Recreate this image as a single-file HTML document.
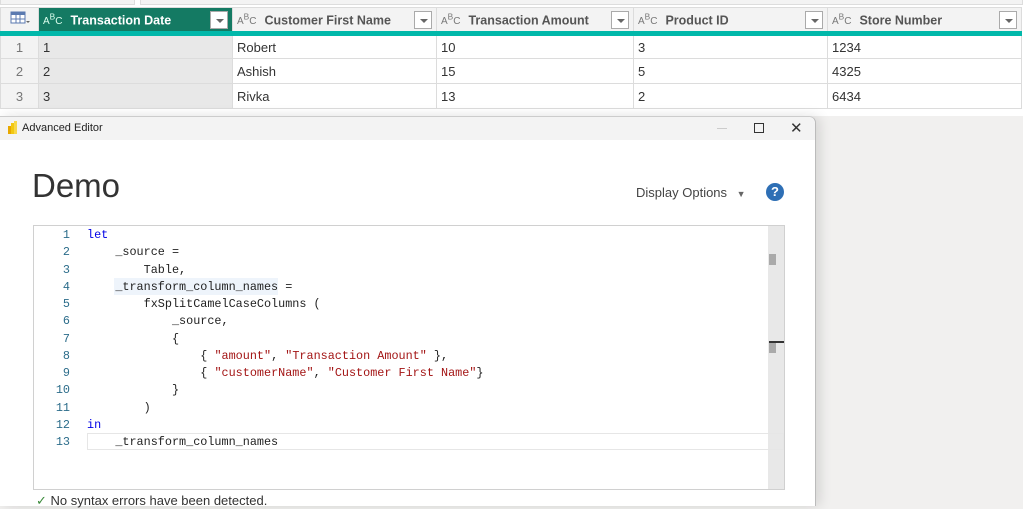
<!DOCTYPE html>
<html><head><style>
*{margin:0;padding:0;box-sizing:border-box}
body{width:1023px;height:500px;overflow:hidden;background:#f1f0ef;font-family:"Liberation Sans",sans-serif;position:relative}
.top{position:absolute;left:0;top:0;width:1023px;height:116px;background:#fff}
.strip{position:absolute;top:0;height:5px;background:#f3f3f3;border:1px solid #ddd;border-top:none}
table{position:absolute;left:0;top:7px;border-collapse:collapse;font-size:13px;color:#333}
td{border:1px solid #dcdcdc;height:25px;padding-left:4px;white-space:nowrap}
th{background:#f3f3f3;height:26px;border:1px solid #dcdcdc;border-bottom:5px solid #01b8aa;text-align:left;color:#555;font-size:12.5px;padding-left:4px;position:relative;white-space:nowrap}
th.sel{background:#147a63;color:#fff}
.abc{font-size:10px;font-weight:normal;margin-right:8px;color:#777}
.sel .abc{color:#dfe}
.dd{position:absolute;right:4px;top:3px;width:18px;height:18px;border:1px solid #aaa;background:#fff}
.dd:after{content:"";position:absolute;left:5px;top:7px;border:4px solid transparent;border-top:4px solid #666}
.rn{background:#f3f3f3;color:#777;text-align:center;padding:0;width:38px}
.g{background:#e8e8e8}
.dlg{position:absolute;left:0;top:116px;width:816px;height:390px;background:#fff;border-right:1px solid #bbb;border-top:1px solid #ccc;border-radius:0 7px 0 0;box-shadow:4px 0 12px rgba(0,0,0,.12)}
.tb{height:23px;background:#f3f3f3;font-size:11px;color:#222;padding:5px 0 0 22px;position:relative;border-radius:0 7px 0 0}
.demo{position:absolute;left:32px;top:50px;font-size:33px;color:#333;font-weight:300}
.disp{position:absolute;left:636px;top:68px;font-size:13px;color:#444}
.help{position:absolute;left:766px;top:66px;width:18px;height:18px;border-radius:50%;background:#2e6fb5;color:#fff;font-size:13px;font-weight:bold;text-align:center;line-height:18px}
.ed{position:absolute;left:33px;top:108px;width:752px;height:265px;border:1px solid #d0d0d0}
.sb{position:absolute;right:0;top:0;width:16px;height:263px;background:#e8e8e8}
.code{position:absolute;left:0;top:0;font-family:"Liberation Mono",monospace;font-size:11.8px;line-height:17.25px;white-space:pre;color:#222}
.ln{position:absolute;left:0;width:36px;text-align:right;color:#2b6c8a}
.k{color:#0000e6}.s{color:#a31515}
</style></head><body>
<div class="top">
<div class="strip" style="left:0;width:135px"></div><div class="strip" style="left:140px;width:883px"></div>
<table>
<tr><th class="rn" style="padding:0"><svg width="22" height="14" viewBox="0 0 22 14"><rect x="2" y="1" width="14" height="11" fill="#fff" stroke="#5b7ab0"/><rect x="2" y="1" width="14" height="3" fill="#5b7ab0"/><path d="M2 8h14M7 4v8M11 4v8" stroke="#5b7ab0"/><path d="M17 10l2 2 2-2z" fill="#666"/></svg></th>
<th class="sel" style="width:194px"><span class="abc">A<sup>B</sup>C</span>Transaction Date<span class="dd"></span></th>
<th style="width:204px"><span class="abc">A<sup>B</sup>C</span>Customer First Name<span class="dd"></span></th>
<th style="width:197px"><span class="abc">A<sup>B</sup>C</span>Transaction Amount<span class="dd"></span></th>
<th style="width:194px"><span class="abc">A<sup>B</sup>C</span>Product ID<span class="dd"></span></th>
<th style="width:194px"><span class="abc">A<sup>B</sup>C</span>Store Number<span class="dd"></span></th></tr>
<tr><td class="rn">1</td><td class="g">1</td><td>Robert</td><td>10</td><td>3</td><td>1234</td></tr>
<tr><td class="rn">2</td><td class="g">2</td><td>Ashish</td><td>15</td><td>5</td><td>4325</td></tr>
<tr><td class="rn">3</td><td class="g">3</td><td>Rivka</td><td>13</td><td>2</td><td>6434</td></tr>
</table></div>
<div class="dlg">
<div class="tb"><svg style="position:absolute;left:7px;top:4px" width="10" height="14"><rect x="1" y="5" width="3" height="8" fill="#e8a800"/><rect x="4" y="2" width="3" height="11" fill="#f2c811"/><rect x="7" y="0" width="3" height="13" fill="#f7d84a"/></svg>Advanced Editor
<span style="position:absolute;left:717px;top:11px;width:10px;border-top:1px solid #ccc"></span>
<span style="position:absolute;left:754px;top:6px;width:10px;height:10px;border:1.3px solid #333"></span>
<span style="position:absolute;left:790px;top:2px;font-size:15px;color:#333">✕</span></div>
<div class="demo">Demo</div>
<div class="disp">Display Options <span style="font-size:9px;color:#666;margin-left:6px">▼</span></div>
<div class="help">?</div>
<div class="ed">
<div class="sb"><div style="position:absolute;left:1px;top:28px;width:7px;height:11px;background:#aaa"></div><div style="position:absolute;left:1px;top:115px;width:15px;height:2px;background:#333"></div><div style="position:absolute;left:1px;top:117px;width:7px;height:10px;background:#aaa"></div></div>
<div style="position:absolute;left:53px;top:207px;width:697px;height:17px;border:1px solid #e6e6e6"></div>
<div style="position:absolute;left:80px;top:52px;width:164px;height:17px;background:#eef4fb"></div>
<div class="code" style="top:1px"><div class="ln">1
2
3
4
5
6
7
8
9
10
11
12
13</div><div style="position:absolute;left:53px"><span class="k">let</span>
    _source =
        Table,
    _transform_column_names =
        fxSplitCamelCaseColumns (
            _source,
            {
                { <span class="s">"amount"</span>, <span class="s">"Transaction Amount"</span> },
                { <span class="s">"customerName"</span>, <span class="s">"Customer First Name"</span>}
            }
        )
<span class="k">in</span>
    _transform_column_names</div></div>
</div>
<div style="position:absolute;left:36px;top:376px;font-size:13px;color:#333"><span style="color:#3a8a3a">✓</span> No syntax errors have been detected.</div>
</div>
</body></html>
